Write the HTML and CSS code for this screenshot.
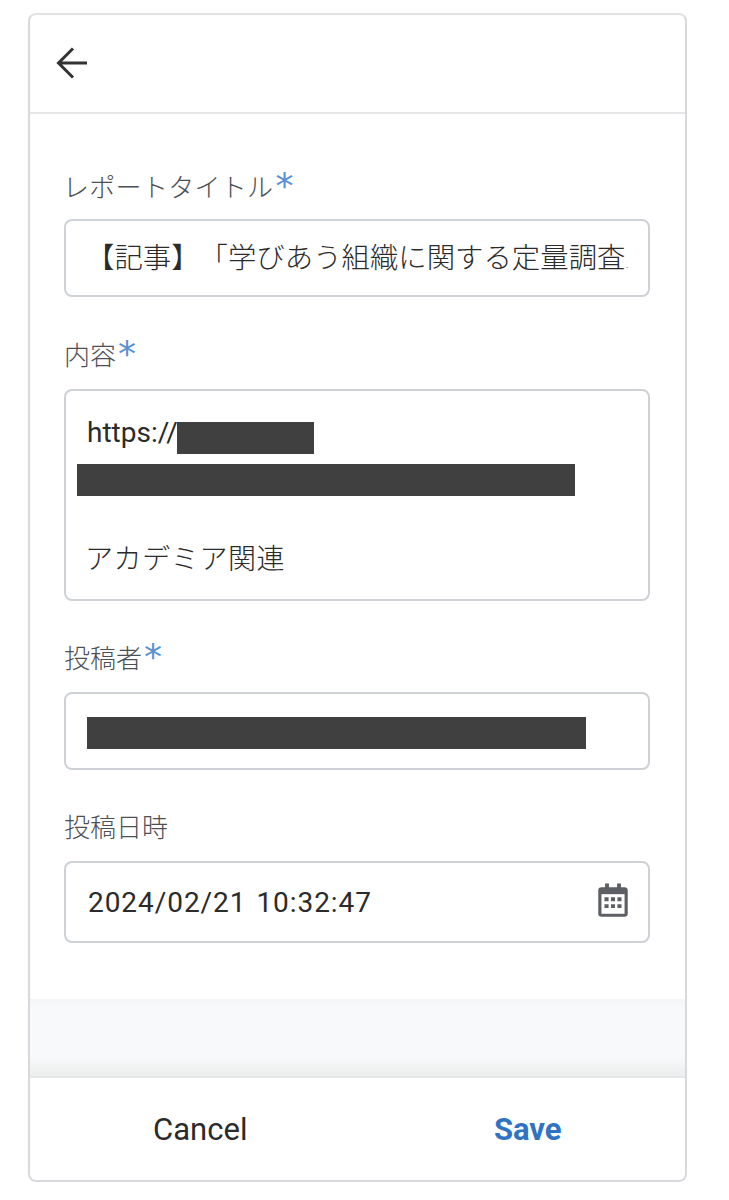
FILE: index.html
```html
<!DOCTYPE html>
<html lang="ja">
<head>
  <meta charset="UTF-8" />
  <meta name="viewport" content="width=device-width, initial-scale=1.0" />
  <title>レポート編集</title>
  <link rel="stylesheet" href="styles.css">
</head>
<body>
  <div class="card">
    <div class="top-bar">
      <svg class="back-icon" viewBox="0 0 32 32" width="32" height="32">
        <path d="M31 16H3M17 1.500 2.500 16 17 30.500" fill="none" stroke="#333" stroke-width="3"/>
      </svg>
    </div>

    <form class="form">
      <div class="field title-field">
        <div class="label">レポートタイトル<span class="req">*</span></div>
        <div class="box title-box"><span class="clip">【記事】「学びあう組織に関する定量調査<span class="fade">.</span></span></div>
      </div>

      <div class="field content-field">
        <div class="label">内容<span class="req">*</span></div>
        <div class="box content-box">
          <div class="line url-line">https://<span class="mask mask-short"></span></div>
          <div class="line"><span class="mask mask-long"></span></div>
          <div class="line"></div>
          <div class="line tag-line">アカデミア関連</div>
        </div>
      </div>

      <div class="field author-field">
        <div class="label">投稿者<span class="req">*</span></div>
        <div class="box author-box"><span class="mask mask-author"></span></div>
      </div>

      <div class="field date-field">
        <div class="label">投稿日時</div>
        <div class="box date-box">
          <span class="date-text">2024/02/21 10:32:47</span>
          <svg class="cal-icon" viewBox="0 0 30 34" width="34" height="36" preserveAspectRatio="none">
            <path d="M8 1.500h3.400V5h7.200V1.500H22V5h3.200A2.800 2.800 0 0 1 28 7.800V30a2.800 2.800 0 0 1-2.800 2.800H4.800A2.800 2.800 0 0 1 2 30V7.800A2.800 2.800 0 0 1 4.800 5H8z" fill="#5c5f63"/>
            <rect x="4.800" y="11.500" width="20.400" height="18.500" fill="#fff"/>
            <path d="M7.500 14.500h3.600v3.600H7.500zM13.200 14.500h3.600v3.600h-3.600zM18.900 14.500h3.600v3.600h-3.600zM7.500 21h3.600v3.600H7.500zM13.200 21h3.600v3.600h-3.600zM18.900 21h3.600v3.600h-3.600z" fill="#5c5f63"/>
          </svg>
        </div>
      </div>
    </form>

    <div class="spacer"></div>

    <div class="actions">
      <button type="button" class="btn">Cancel</button>
      <button type="button" class="btn btn-save">Save</button>
    </div>
  </div>
</body>
</html>
```

FILE: styles.css
```css
body {
  margin: 0;
  background: #fff;
  font-family: Roboto, "Noto Sans CJK JP", sans-serif;
  color: #333;
  text-spacing-trim: space-all;
}
.card {
  box-sizing: border-box;
  width: 659px;
  height: 1169px;
  margin: 13px 0 0 28px;
  background: #fff;
  border: 2px solid #d8d9dc;
  border-top-color: #e2e3e5;
  border-radius: 8px;
  display: flex;
  flex-direction: column;
  overflow: hidden;
}
.top-bar {
  height: 97px;
  flex: none;
  border-bottom: 2px solid #e6e7e9;
  display: flex;
  align-items: center;
  padding-left: 26px;
}
.back-icon { margin-bottom: 2px; }
.form {
  flex: none;
  height: 885px;
  box-sizing: border-box;
  padding: 0 35px 0 34px;
}
.title-field { padding-top: 56px; }
.title-field .label {
  margin: 0 0 13px -1px;
  letter-spacing: 0.3px;
}
.content-field { padding-top: 41px; }
.author-field { padding-top: 40px; }
.date-field { padding-top: 40px; }
.label {
  font-size: 26px;
  font-weight: 300;
  line-height: 36px;
  height: 36px;
  margin-bottom: 15px;
  color: #4d4f53;
}
.req {
  font-family: "DejaVu Sans", sans-serif;
  font-weight: 400;
  color: #5b8fd6;
  font-size: 36px;
  line-height: 31px;
  margin-left: 2px;
  vertical-align: top;
}
.box {
  box-sizing: border-box;
  border: 2px solid #ced1d6;
  border-radius: 8px;
  background: #fff;
  color: #2b2b2b;
}
.title-box {
  height: 78px;
  display: flex;
  align-items: center;
  padding: 0 10px 5px 20px;
  font-size: 28.4px;
  font-weight: 300;
}
.clip {
  display: block;
  white-space: nowrap;
}
.fade {
  font-size: 14px;
  color: #7d8085;
}
.content-box {
  height: 212px;
  padding: 23px 11px 0 21px;
}
.line {
  height: 42px;
  line-height: 42px;
  font-size: 28px;
  white-space: nowrap;
}
.url-line {
  display: flex;
  align-items: flex-start;
  line-height: 38px;
}
.tag-line {
  margin: -9px 0 0 -2px;
  font-weight: 300;
  letter-spacing: 0.6px;
}
.mask {
  display: inline-block;
  background: #404040;
  height: 32px;
}
.mask-short { width: 137px; margin-left: -1px; margin-top: 8px; }
.mask-long { width: 498px; margin: 8px 0 0 -10px; display: block; }
.author-box {
  height: 78px;
  padding: 23px 0 0 21px;
}
.mask-author { width: 499px; display: block; }
.date-box {
  height: 82px;
  display: flex;
  align-items: center;
  justify-content: space-between;
  padding: 0 18px 0 22px;
}
.date-text {
  font-size: 28px;
  letter-spacing: 0.95px;
  word-spacing: 2px;
}
.cal-icon { display: block; margin-bottom: 4px; }
.spacer {
  flex: 1;
  background: linear-gradient(#f4f5f6, #f8f9fa 8px, #f8f9fa 58px, #eceded);
}
.actions {
  flex: none;
  height: 104px;
  border-top: 2px solid #e6e7e9;
  display: flex;
  box-sizing: border-box;
}
.btn {
  flex: 1;
  border: none;
  background: none;
  font-family: Roboto, sans-serif;
  font-size: 31px;
  color: #2b2b2b;
  padding: 0 0 0 13px;
}
.btn-save {
  color: #2f74c4;
  font-weight: 700;
}
```
